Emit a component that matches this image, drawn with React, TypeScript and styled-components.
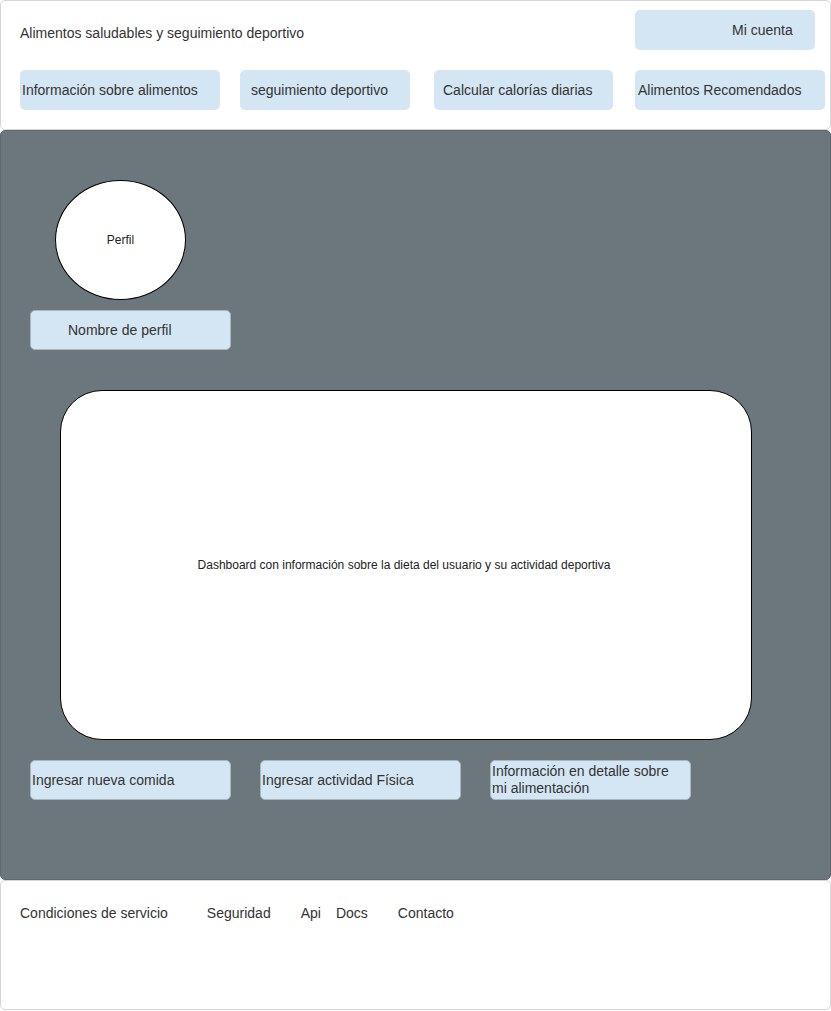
import React from "react";
import styled, { createGlobalStyle } from "styled-components";

const GlobalStyle = createGlobalStyle`
  html, body { margin: 0; padding: 0; background: #ffffff; }
  body { font-family: "Liberation Sans", Arial, Helvetica, sans-serif; color: #333333; }
  * { box-sizing: border-box; }
`;

const Page = styled.div`
  width: 831px;
  display: flex;
  flex-direction: column;
`;

const Header = styled.header`
  height: 130px;
  background: #ffffff;
  border: 1px solid #d6d6d6;
  border-radius: 5px;
  padding-top: 9px;
  display: flex;
  flex-direction: column;
`;

const TopRow = styled.div`
  height: 40px;
  display: flex;
  align-items: center;
  justify-content: space-between;
  padding-left: 19px;
  padding-right: 15px;
`;

const Title = styled.div`
  font-size: 14px;
  margin-top: 6px;
`;

const Chip = styled.div<{ $w: number; $pl: number; $pr?: number; $ml?: number }>`
  width: ${(p) => p.$w}px;
  height: 40px;
  margin-left: ${(p) => p.$ml ?? 0}px;
  padding-left: ${(p) => p.$pl}px;
  padding-right: ${(p) => p.$pr ?? 0}px;
  flex: none;
  display: flex;
  align-items: center;
  background: #d4e6f4;
  border-radius: 5px;
  font-size: 14px;
  color: #333333;
  line-height: 17px;
  white-space: nowrap;
`;

const DarkChip = styled(Chip)`
  border: 1px solid #a8b6c0;
  white-space: normal;
`;

const NavRow = styled.nav`
  margin-top: 20px;
  display: flex;
  padding-left: 19px;
`;

const Main = styled.main`
  height: 750px;
  background: #6c777d;
  border: 1px solid #5f696f;
  border-radius: 5px;
  padding-top: 49px;
  display: flex;
  flex-direction: column;
  align-items: flex-start;
`;

const Avatar = styled.div`
  width: 131px;
  height: 120px;
  margin-left: 54px;
  border-radius: 50%;
  background: #ffffff;
  border: 1px solid #000000;
  display: flex;
  align-items: center;
  justify-content: center;
  font-size: 12px;
  color: #222222;
`;

const ProfileName = styled(DarkChip)`
  margin-top: 10px;
`;

const Dashboard = styled.section`
  margin-top: 40px;
  margin-left: 59px;
  width: 692px;
  height: 350px;
  background: #ffffff;
  border: 1px solid #000000;
  border-radius: 42px;
  display: flex;
  align-items: center;
  justify-content: center;
  font-size: 12px;
  color: #222222;
  padding-right: 4px;
`;

const ActionRow = styled.div`
  margin-top: 20px;
  display: flex;
`;

const Footer = styled.footer`
  height: 130px;
  background: #ffffff;
  border: 1px solid #d6d6d6;
  border-radius: 5px;
  padding-top: 24px;
  padding-left: 19px;
  display: flex;
  align-items: flex-start;
`;

const FooterLink = styled.a<{ $ml: number }>`
  margin-left: ${(p) => p.$ml}px;
  font-size: 14px;
  color: #333333;
  text-decoration: none;
  line-height: 17px;
`;

export default function App() {
  return (
    <>
      <GlobalStyle />
      <Page>
        <Header>
          <TopRow>
            <Title>Alimentos saludables y seguimiento deportivo</Title>
            <Chip $w={180} $pl={97}>Mi cuenta</Chip>
          </TopRow>
          <NavRow>
            <Chip $w={200} $pl={2}>Información sobre alimentos</Chip>
            <Chip $w={170} $pl={11} $ml={20}>seguimiento deportivo</Chip>
            <Chip $w={179} $pl={9} $ml={24}>Calcular calorías diarias</Chip>
            <Chip $w={190} $pl={3} $ml={22}>Alimentos Recomendados</Chip>
          </NavRow>
        </Header>
        <Main>
          <Avatar>Perfil</Avatar>
          <ProfileName $w={201} $pl={37} $ml={29}>Nombre de perfil</ProfileName>
          <Dashboard>Dashboard con información sobre la dieta del usuario y su actividad deportiva</Dashboard>
          <ActionRow>
            <DarkChip $w={201} $pl={1} $ml={29}>Ingresar nueva comida</DarkChip>
            <DarkChip $w={201} $pl={1} $ml={29}>Ingresar actividad Física</DarkChip>
            <DarkChip $w={201} $pl={1} $pr={20} $ml={29}>Información en detalle sobre mi alimentación</DarkChip>
          </ActionRow>
        </Main>
        <Footer>
          <FooterLink href="#" $ml={0}>Condiciones de servicio</FooterLink>
          <FooterLink href="#" $ml={39}>Seguridad</FooterLink>
          <FooterLink href="#" $ml={30}>Api</FooterLink>
          <FooterLink href="#" $ml={15}>Docs</FooterLink>
          <FooterLink href="#" $ml={30}>Contacto</FooterLink>
        </Footer>
      </Page>
    </>
  );
}
